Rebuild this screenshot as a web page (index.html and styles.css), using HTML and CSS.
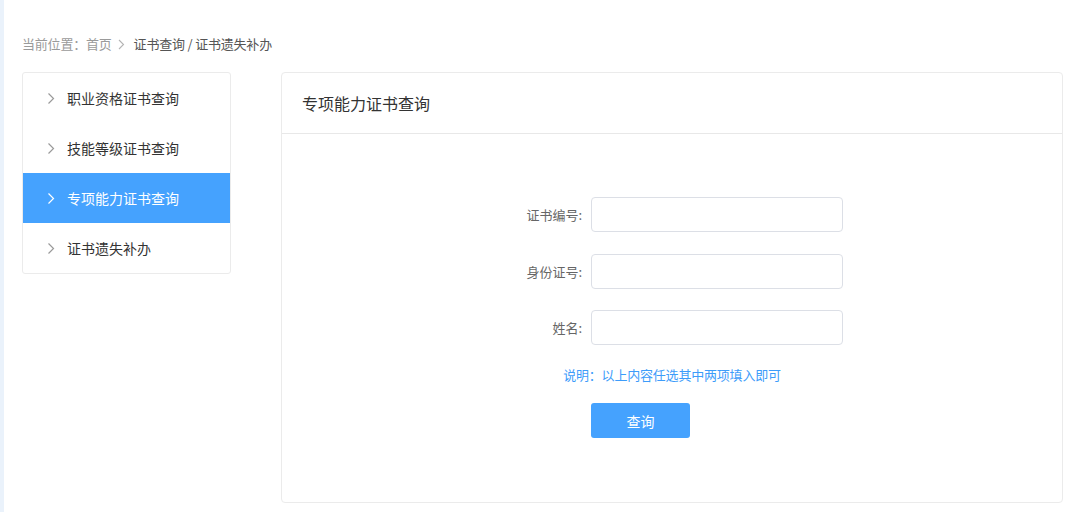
FILE: index.html
```html
<!DOCTYPE html>
<html lang="zh-CN">
<head>
<meta charset="utf-8">
<title>专项能力证书查询</title>
<link rel="stylesheet" href="styles.css">
</head>
<body>
<div class="page">
  <div class="crumbs">
    <span class="crumb-muted">当前位置：首页</span>
    <svg class="crumb-sep" width="7" height="11" viewBox="0 0 7 11"><polyline points="1,1 5.5,5.5 1,10" fill="none" stroke="#b4b4b4" stroke-width="1.1"/></svg>
    <span class="crumb-cur">证书查询 / 证书遗失补办</span>
  </div>
  <div class="main">
    <ul class="side">
      <li class="side-item"><svg class="chev" width="8" height="13" viewBox="0 0 8 13"><polyline points="1.5,1.5 6.5,6.5 1.5,11.5" fill="none" stroke="currentColor" stroke-width="1.2"/></svg><span>职业资格证书查询</span></li>
      <li class="side-item"><svg class="chev" width="8" height="13" viewBox="0 0 8 13"><polyline points="1.5,1.5 6.5,6.5 1.5,11.5" fill="none" stroke="currentColor" stroke-width="1.2"/></svg><span>技能等级证书查询</span></li>
      <li class="side-item active"><svg class="chev" width="8" height="13" viewBox="0 0 8 13"><polyline points="1.5,1.5 6.5,6.5 1.5,11.5" fill="none" stroke="currentColor" stroke-width="1.2"/></svg><span>专项能力证书查询</span></li>
      <li class="side-item"><svg class="chev" width="8" height="13" viewBox="0 0 8 13"><polyline points="1.5,1.5 6.5,6.5 1.5,11.5" fill="none" stroke="currentColor" stroke-width="1.2"/></svg><span>证书遗失补办</span></li>
    </ul>
    <section class="panel">
      <div class="panel-head">专项能力证书查询</div>
      <div class="panel-body">
        <form class="form">
          <div class="row"><label class="lbl">证书编号:</label><input class="inp" type="text"></div>
          <div class="row"><label class="lbl">身份证号:</label><input class="inp" type="text"></div>
          <div class="row"><label class="lbl">姓名:</label><input class="inp" type="text"></div>
        </form>
        <p class="note">说明：以上内容任选其中两项填入即可</p>
        <div class="actions"><button class="btn" type="button">查询</button></div>
      </div>
    </section>
  </div>
</div>
</body>
</html>
```

FILE: styles.css
```css
* { box-sizing: border-box; }
html, body { margin: 0; padding: 0; height: 100%; }
body {
  background: #eaf2fb;
  font-family: "Microsoft YaHei", "Noto Sans CJK SC", "Noto Sans", sans-serif;
  color: #333;
}
.page {
  margin-left: 4px;
  min-height: 512px;
  background: #fff;
  padding: 34px 17px 0 18px;
}
.crumbs {
  height: 20px;
  display: flex;
  align-items: center;
  font-size: 13px;
  line-height: 20px;
  letter-spacing: -0.2px;
}
.crumb-muted { color: #9a9a9a; }
.crumb-sep { margin: 0 9px 0 6px; }
.crumb-cur { color: #555; }
.main {
  display: flex;
  align-items: flex-start;
  margin-top: 18px;
}
.side {
  list-style: none;
  margin: 0;
  padding: 0;
  width: 209px;
  border: 1px solid #ebebeb;
  border-radius: 3px;
  flex: none;
}
.side-item {
  height: 50px;
  display: flex;
  align-items: center;
  padding-left: 24px;
  font-size: 14px;
  color: #333;
  cursor: pointer;
}
.side-item .chev { color: #9a9a9a; margin-right: 12px; }
.side-item.active { background: #45a2fe; color: #fff; }
.side-item.active .chev { color: #fff; }
.panel {
  margin-left: 50px;
  flex: 1;
  height: 431px;
  border: 1px solid #ebebeb;
  border-radius: 4px;
}
.panel-head {
  height: 61px;
  border-bottom: 1px solid #e8e8e8;
  padding-left: 20px;
  display: flex;
  align-items: center;
  font-size: 16px;
  color: #333;
}
.panel-body { padding-top: 63px; }
.form {
  padding-left: 209px;
  display: flex;
  flex-direction: column;
  gap: 21.5px;
}
.row { display: flex; align-items: center; }
.lbl {
  width: 100px;
  padding-right: 9px;
  text-align: right;
  font-size: 13px;
  color: #666;
}
.inp {
  width: 252px;
  height: 35px;
  border: 1px solid #dcdfe6;
  border-radius: 4px;
  outline: none;
  padding: 0 10px;
  font-size: 13px;
}
.note {
  margin: 20px 0 0;
  text-align: center;
  font-size: 13px;
  line-height: 20px;
  letter-spacing: -0.2px;
  color: #3d9cfa;
}
.actions { padding-left: 309px; margin-top: 18px; }
.btn {
  width: 99px;
  height: 35px;
  border: none;
  border-radius: 3px;
  background: #45a2fe;
  color: #fff;
  font-family: inherit;
  font-size: 14px;
  cursor: pointer;
}
```
